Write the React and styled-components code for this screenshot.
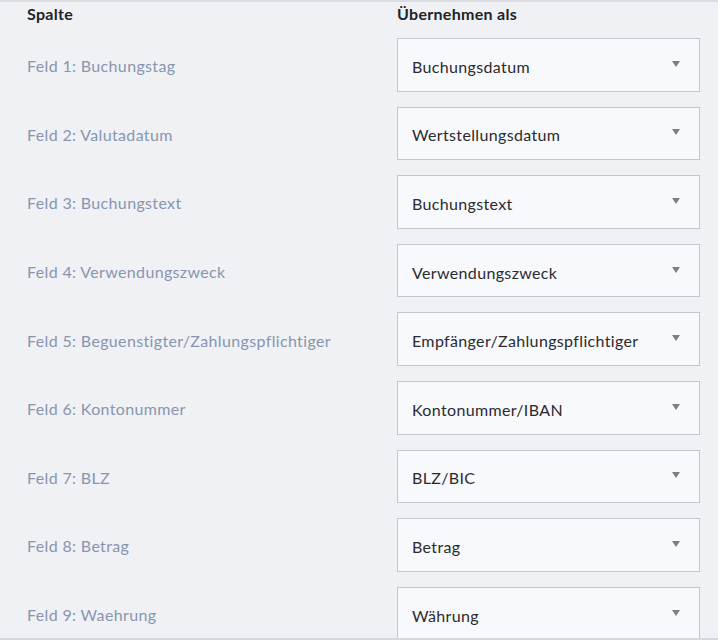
import React from "react";
import styled, { createGlobalStyle } from "styled-components";

const GlobalStyle = createGlobalStyle`
  html, body {
    margin: 0;
    padding: 0;
    background: #f0f1f5;
    font-family: Lato, "Open Sans", sans-serif;
  }
`;

const mappings = [
  { field: "Feld 1: Buchungstag", target: "Buchungsdatum" },
  { field: "Feld 2: Valutadatum", target: "Wertstellungsdatum" },
  { field: "Feld 3: Buchungstext", target: "Buchungstext" },
  { field: "Feld 4: Verwendungszweck", target: "Verwendungszweck" },
  { field: "Feld 5: Beguenstigter/Zahlungspflichtiger", target: "Empfänger/Zahlungspflichtiger" },
  { field: "Feld 6: Kontonummer", target: "Kontonummer/IBAN" },
  { field: "Feld 7: BLZ", target: "BLZ/BIC" },
  { field: "Feld 8: Betrag", target: "Betrag" },
  { field: "Feld 9: Waehrung", target: "Währung" },
];

function App() {
  return (
    <>
      <GlobalStyle />
      <Panel>
        <Row $head>
          <HeadCell>Spalte</HeadCell>
          <HeadCell>Übernehmen als</HeadCell>
        </Row>
        <Rows>
          {mappings.map((m) => (
            <Row key={m.field}>
              <FieldLabel>{m.field}</FieldLabel>
              <Select>
                <Value>{m.target}</Value>
                <Caret />
              </Select>
            </Row>
          ))}
        </Rows>
      </Panel>
    </>
  );
}

const Panel = styled.div`
  box-sizing: border-box;
  height: 640px;
  overflow: hidden;
  border-top: 2px solid #dcdde3;
  border-bottom: 2px solid #d6d8de;
  background: #f0f1f5;
`;

const Rows = styled.div`
  display: flex;
  flex-direction: column;
  gap: 15px;
`;

const Row = styled.div`
  display: grid;
  grid-template-columns: 370px 303px;
  height: ${(p) => (p.$head ? "24px" : "53.6px")};
  margin-bottom: ${(p) => (p.$head ? "12px" : "0")};
  padding-left: 27px;
  flex-shrink: 0;
`;

const HeadCell = styled.div`
  font-size: 16px;
  font-weight: 700;
  letter-spacing: 0.3px;
  color: #222328;
  line-height: 24px;
`;

const FieldLabel = styled.div`
  display: flex;
  align-items: center;
  font-size: 16px;
  letter-spacing: 0.35px;
  color: #8796ae;
  padding-top: 2px;
`;

const Select = styled.div`
  box-sizing: border-box;
  display: flex;
  align-items: center;
  justify-content: space-between;
  padding: 0 19px 0 14px;
  background: #f8f9fd;
  border: 1px solid #c3c6d0;
  font-size: 16px;
  letter-spacing: 0.35px;
  color: #2a2b2f;
`;

const Value = styled.span`
  padding-top: 3px;
`;

const Caret = styled.span`
  width: 0;
  height: 0;
  border-left: 4px solid transparent;
  border-right: 4px solid transparent;
  border-top: 6px solid #7f7f82;
  margin-bottom: 2px;
`;

export default App;
